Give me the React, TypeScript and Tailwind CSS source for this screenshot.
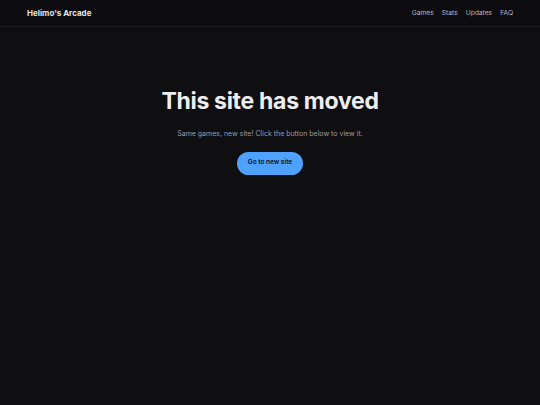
export default function App() {
  return (
    <div className="min-h-[405px] bg-[#0f0f12] text-[#e5e5ea]" style={{ fontFamily: 'Inter, "Liberation Sans", sans-serif' }}>
      <header className="h-[27px] flex items-center justify-between px-[27px] bg-[#0c0c10] border-b border-[#1c1c22]">
        <span className="text-[8px] font-bold text-[#e4e4e8]">Helimo's Arcade</span>
        <nav className="flex items-center gap-[8px] text-[6.7px] text-[#b8b8c0]">
          <a>Games</a>
          <a>Stats</a>
          <a>Updates</a>
          <a>FAQ</a>
        </nav>
      </header>
      <main className="flex flex-col items-center pt-[61px]">
        <h1 className="text-[23px] leading-[27px] font-bold tracking-[-0.3px] text-[#eeeef2]">This site has moved</h1>
        <p className="mt-[14px] text-[7px] text-[#9a9aa6]">Same games, new site! Click the button below to view it.</p>
        <button className="mt-[12px] h-[23px] px-[11px] rounded-full bg-[#4ea1ff] text-[6.5px] font-semibold text-[#0b1220]">Go to new site</button>
      </main>
    </div>
  )
}
